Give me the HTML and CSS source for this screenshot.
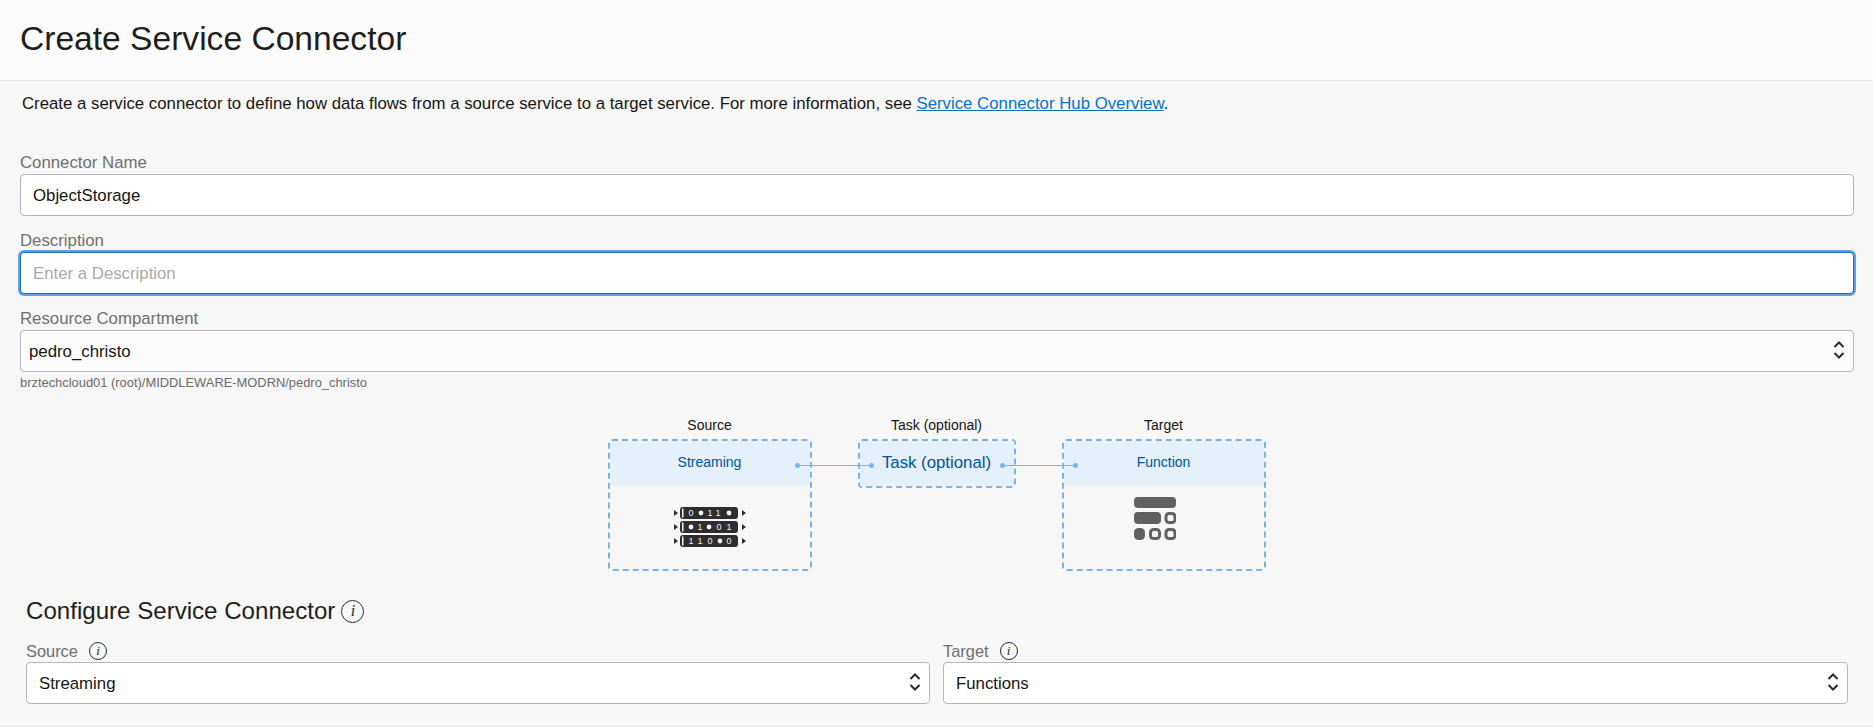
FILE: index.html
```html
<!DOCTYPE html>
<html lang="en">
<head>
  <meta charset="UTF-8">
  <title>Create Service Connector</title>
  <link rel="stylesheet" href="styles.css">
</head>
<body>

  <header class="page-header">
    <h1>Create Service Connector</h1>
  </header>

  <p class="intro">Create a service connector to define how data flows from a source service to a target service. For more information, see <a href="#">Service Connector Hub Overview</a>.</p>

  <form class="main-form">
    <div class="field">
      <label for="connectorName">Connector Name</label>
      <input type="text" id="connectorName" value="ObjectStorage">
    </div>

    <div class="field">
      <label for="description">Description</label>
      <input type="text" id="description" class="focused" placeholder="Enter a Description">
    </div>

    <div class="field field-compartment">
      <label for="compartment">Resource Compartment</label>
      <div class="select-wrap">
        <select id="compartment" class="select-compartment"><option>pedro_christo</option></select>
        <svg class="chevrons" width="12" height="18" viewBox="0 0 12 18"><path d="M1.5 6 6 1.5 10.5 6M1.5 12 6 16.5 10.5 12"/></svg>
      </div>
      <p class="hint">brztechcloud01 (root)/MIDDLEWARE-MODRN/pedro_christo</p>
    </div>
  </form>

  <div class="diagram">
    <div class="diagram-labels">
      <span class="label-source">Source</span>
      <span class="label-task">Task (optional)</span>
      <span class="label-target">Target</span>
    </div>
    <div class="diagram-row">
      <div class="node node-source">
        <div class="node-head">Streaming</div>
        <div class="node-body">
          <svg width="72" height="42" viewBox="0 0 72 42">
            <path class="stream-arrows" d="M0 3l4 3-4 3zM68 3l4 3-4 3zM0 17l4 3-4 3zM68 17l4 3-4 3zM0 31l4 3-4 3zM68 31l4 3-4 3z"/>
            <rect class="stream-bar" x="6" y="0" width="58" height="12" rx="3"/>
            <rect class="stream-bar" x="6" y="14" width="58" height="12" rx="3"/>
            <rect class="stream-bar" x="6" y="28" width="58" height="12" rx="3"/>
            <rect class="stream-cap" x="8" y="1.5" width="1.5" height="9"/>
            <rect class="stream-cap" x="8" y="15.5" width="1.5" height="9"/>
            <rect class="stream-cap" x="8" y="29.5" width="1.5" height="9"/>
            <g class="stream-text">
              <text x="17" y="9">0</text><circle cx="27" cy="6" r="2.4"/><text x="36" y="9">1</text><text x="44" y="9">1</text><circle cx="55" cy="6" r="2.4"/>
              <circle cx="17" cy="20" r="2.4"/><text x="26" y="23">1</text><circle cx="35" cy="20" r="2.4"/><text x="45" y="23">0</text><text x="55" y="23">1</text>
              <text x="17" y="37">1</text><text x="26" y="37">1</text><text x="36" y="37">0</text><circle cx="46" cy="34" r="2.4"/><text x="55" y="37">0</text>
            </g>
          </svg>
        </div>
      </div>

      <div class="node node-task">
        <div class="node-head">Task (optional)</div>
      </div>

      <div class="node node-target">
        <div class="node-head">Function</div>
        <div class="node-body">
          <svg width="42" height="43" viewBox="0 0 42 43">
            <g class="fn-solid">
              <rect x="0" y="0" width="42" height="11" rx="4"/>
              <rect x="0" y="15" width="27" height="12" rx="4"/>
              <rect x="0" y="31" width="11" height="12" rx="4.5"/>
            </g>
            <g class="fn-open">
              <rect x="32" y="16.5" width="9" height="9" rx="3"/>
              <rect x="16.5" y="32.5" width="9" height="9" rx="3"/>
              <rect x="32" y="32.5" width="9" height="9" rx="3"/>
            </g>
          </svg>
        </div>
      </div>

      <span class="link link-one"></span>
      <span class="link link-two"></span>
    </div>
  </div>

  <section class="configure">
    <h2>Configure Service Connector <span class="info info-large">i</span></h2>
    <div class="configure-cols">
      <div class="config-col">
        <label for="source">Source <span class="info">i</span></label>
        <div class="select-wrap">
          <select id="source"><option>Streaming</option></select>
          <svg class="chevrons" width="12" height="18" viewBox="0 0 12 18"><path d="M1.5 6 6 1.5 10.5 6M1.5 12 6 16.5 10.5 12"/></svg>
        </div>
      </div>
      <div class="config-col">
        <label for="target">Target <span class="info">i</span></label>
        <div class="select-wrap">
          <select id="target"><option>Functions</option></select>
          <svg class="chevrons" width="12" height="18" viewBox="0 0 12 18"><path d="M1.5 6 6 1.5 10.5 6M1.5 12 6 16.5 10.5 12"/></svg>
        </div>
      </div>
    </div>
  </section>

</body>
</html>
```

FILE: styles.css
```css
* {
  box-sizing: border-box;
}

html, body {
  height: 727px;
  overflow: hidden;
}

body {
  font-family: "Liberation Sans", Arial, sans-serif;
  background-color: #f7f7f7;
  color: #161513;
  margin: 0;
  border-bottom: 1px solid #e4e4e4;
}

.page-header {
  height: 81px;
  padding: 0 20px;
  background-color: #fcfcfc;
  border-bottom: 1px solid #e4e4e4;
}

h1 {
  margin: 0;
  font-size: 33.6px;
  font-weight: normal;
  line-height: 77px;
  color: #1f1e1c;
}

.intro {
  margin: 0;
  padding: 13px 22px 0;
  font-size: 16.8px;
  line-height: 20px;
}

.intro a {
  color: #0572ce;
}

.main-form {
  padding: 40px 19px 0 20px;
}

.field {
  margin-bottom: 16px;
}

label {
  display: block;
  height: 20px;
  font-size: 16.8px;
  line-height: 18px;
  color: #706f6e;
}

input, select {
  display: block;
  width: 100%;
  height: 42px;
  font-family: inherit;
  font-size: 16.8px;
  color: #161513;
  background-color: #fff;
  border: 1px solid #b3b6bf;
  border-radius: 4px;
  padding: 2px 12px 0;
  outline: none;
  appearance: none;
}

select {
  padding-top: 0;
}

input::placeholder {
  color: #a9a9a9;
  opacity: 1;
}

.focused {
  border-color: #1b6ec2;
  box-shadow: 0 0 0 2px #5f9fe2;
}

.select-compartment {
  background-color: #fcfcfc;
  padding-left: 8px;
}

.select-wrap {
  position: relative;
}

.chevrons {
  position: absolute;
  right: 9px;
  top: 11px;
  fill: none;
  stroke: #2b2b2b;
  stroke-width: 2;
}

.field-compartment {
  margin-bottom: 0;
}

.hint {
  margin: 4px 0 0;
  font-size: 12.9px;
  line-height: 14px;
  color: #6b6b6b;
}

.diagram {
  width: 658px;
  margin: 26px auto 0;
}

.diagram-labels {
  display: grid;
  grid-template-columns: 204px 46px 158px 46px 204px;
  font-size: 14px;
  line-height: 18px;
  text-align: center;
  margin-bottom: 5px;
}

.label-source {
  grid-column: 1;
}

.label-task {
  grid-column: 3;
}

.label-target {
  grid-column: 5;
}

.diagram-row {
  position: relative;
  display: flex;
  justify-content: space-between;
  align-items: flex-start;
}

.node {
  width: 204px;
  height: 132px;
  border: 2px dashed #7db5e6;
  border-radius: 4px;
}

.node-task {
  width: 158px;
  height: 49px;
}

.node-head {
  height: 45px;
  padding-top: 12px;
  background-color: #e4f0fa;
  color: #00559f;
  font-size: 14px;
  line-height: 18px;
  text-align: center;
}

.node-task .node-head {
  padding-top: 12px;
  font-size: 16.8px;
  line-height: 20px;
}

.node-body {
  display: flex;
  justify-content: center;
  padding-top: 21px;
}

.node-target .node-body {
  padding: 11px 18px 0 0;
}

.stream-arrows, .stream-bar {
  fill: #2f2d2d;
}

.stream-cap {
  fill: #f3f3f3;
}

.stream-text {
  fill: #f3f3f3;
  font-size: 9px;
  text-anchor: middle;
}

.fn-solid {
  fill: #616161;
}

.fn-open {
  fill: none;
  stroke: #616161;
  stroke-width: 3;
}

.link {
  position: absolute;
  top: 26px;
  height: 1px;
  background-color: #7db5e6;
}

.link::before, .link::after {
  content: "";
  position: absolute;
  top: -2px;
  width: 5px;
  height: 5px;
  border-radius: 50%;
  background-color: #7db5e6;
}

.link::before {
  left: -2px;
}

.link::after {
  right: -2px;
}

.link-one {
  left: 189px;
  width: 75px;
}

.link-two {
  left: 394px;
  width: 74px;
}

.configure {
  padding: 25px 26px 0;
}

h2 {
  display: flex;
  align-items: center;
  gap: 6px;
  margin: 0 0 14px;
  font-size: 24.1px;
  font-weight: normal;
  line-height: 30px;
  color: #1f1e1c;
}

.configure-cols {
  display: grid;
  grid-template-columns: 904px 905px;
  gap: 13px;
}

.config-col label {
  display: flex;
  align-items: center;
  gap: 11px;
  height: 22px;
  font-size: 16.4px;
  padding: 1px 0;
}

.info {
  display: inline-flex;
  align-items: center;
  justify-content: center;
  width: 18px;
  height: 18px;
  border: 1.5px solid #2b2b2b;
  border-radius: 50%;
  font-family: "Liberation Serif", serif;
  font-size: 13px;
  font-style: italic;
  color: #2b2b2b;
}

.info-large {
  width: 23px;
  height: 23px;
  font-size: 16px;
}
```
